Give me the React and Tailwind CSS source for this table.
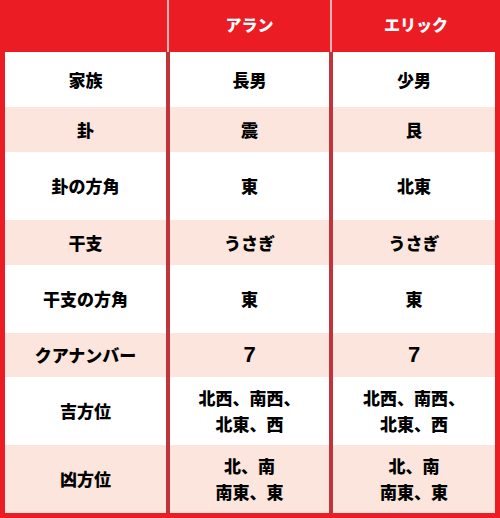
import React from "react";

const rows = [
  { h: "家族", a: "長男", e: "少男", pink: false },
  { h: "卦", a: "震", e: "艮", pink: true },
  { h: "卦の方角", a: "東", e: "北東", pink: false },
  { h: "干支", a: "うさぎ", e: "うさぎ", pink: true },
  { h: "干支の方角", a: "東", e: "東", pink: false },
  { h: "クアナンバー", a: "7", e: "7", pink: true, num: true },
  { h: "吉方位", a: ["北西、南西、", "北東、西"], e: ["北西、南西、", "北東、西"], pink: false },
  { h: "凶方位", a: ["北、南", "南東、東"], e: ["北、南", "南東、東"], pink: true },
];

function Cell({ v, pink, num }) {
  return (
    <div
      className={
        "flex flex-col items-center justify-center text-center text-black leading-[26px] " +
        (pink ? "bg-[#fce5dc] " : "bg-white ") +
        (num ? "text-[22px] font-bold font-['Liberation_Sans',sans-serif]" : "text-[17px] font-black")
      }
    >
      {Array.isArray(v) ? v.map((l, i) => <span key={i}>{l}</span>) : <span>{v}</span>}
    </div>
  );
}

export default function App() {
  return (
    <div
      className="w-[500px] h-[518px] bg-[#ec1c24] flex flex-col"
      style={{ fontFamily: '"Noto Sans CJK JP", "Noto Sans", sans-serif' }}
    >
      <div className="flex h-[52px] text-white font-black text-[16px]">
        <div className="w-[167px]" />
        <div className="w-[2px] bg-[#f5b5b5]" />
        <div className="w-[161px] flex items-center justify-center pb-[4px]">アラン</div>
        <div className="w-[2px] bg-[#f5b5b5]" />
        <div className="flex-1 flex items-center justify-center pb-[4px]">エリック</div>
      </div>
      <div className="px-[5px] pb-[5px] flex-1 flex">
        <div className="flex-1 grid grid-cols-[161px_159px_162px] grid-rows-[55px_45px_68px_45px_68px_44px_68px_68px] gap-x-[4px] bg-[#c0343b]">
          {rows.map((r, i) => (
            <React.Fragment key={i}>
              <Cell v={r.h} pink={r.pink} />
              <Cell v={r.a} pink={r.pink} num={r.num} />
              <Cell v={r.e} pink={r.pink} num={r.num} />
            </React.Fragment>
          ))}
        </div>
      </div>
    </div>
  );
}
